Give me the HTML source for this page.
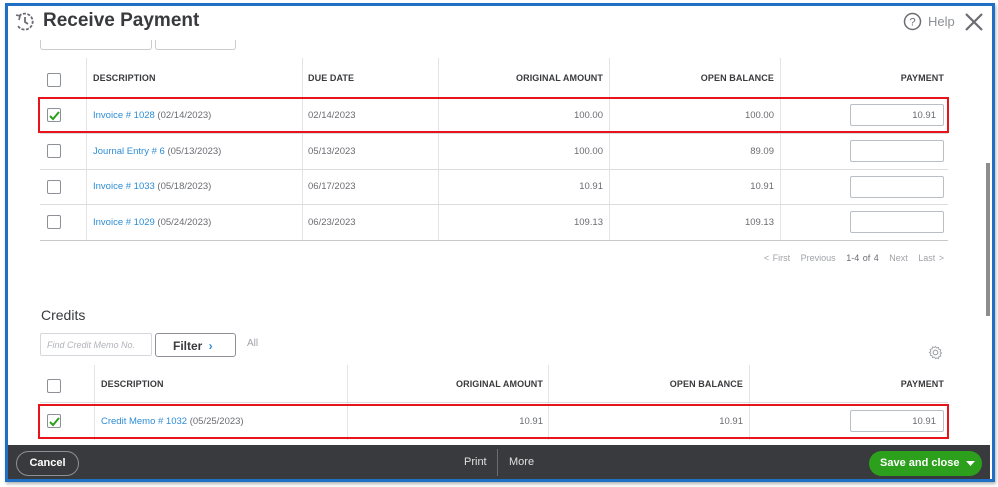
<!DOCTYPE html>
<html><head><meta charset="utf-8"><style>
*{box-sizing:border-box;margin:0;padding:0}
body{width:998px;height:487px;background:#fff;position:relative;overflow:hidden;font-family:"Liberation Sans",Arial,sans-serif;color:#393a3d}
.a{position:absolute}
.frame{left:5px;top:3px;width:990px;height:479px;border:3px solid #1f6fc5;box-shadow:1px 2px 3px rgba(0,0,0,.3)}
.th{font-size:9px;font-weight:bold;color:#393a3d;letter-spacing:.1px}
.td{font-size:9.5px;color:#6b6c72}
.lnk{color:#2d8dd6}
.cb{width:14px;height:14px;border:1px solid #8d9096;border-radius:2px;background:#fff}
.vl{width:1px;background:#e4e4e6}
.hl{height:1px;background:#dcdcde}
.inp{width:94px;height:22px;border:1px solid #babec5;border-radius:2px;background:#fff;font-size:9.5px;color:#6b6c72;display:flex;align-items:center;justify-content:flex-end;padding-right:7px}
.red{border:2px solid #e6151b}
.r{text-align:right}
</style></head><body>
<div class="a frame"></div>
<svg class="a" style="left:14px;top:11px" width="22" height="22" viewBox="0 0 22 22"><path d="M5 5 A8 8 0 1 1 4 15" fill="none" stroke="#6b6c72" stroke-width="1.8" stroke-dasharray="3 1.5"/><path d="M11 6v5l3 2" fill="none" stroke="#6b6c72" stroke-width="1.8"/><path d="M2 4l4 1-1 4" fill="none" stroke="#6b6c72" stroke-width="1.6"/></svg>
<div class="a" style="left:43px;top:10px;font-size:19px;font-weight:bold;color:#393a3d">Receive Payment</div>
<svg class="a" style="left:903px;top:12px" width="19" height="19"><circle cx="9.5" cy="9.5" r="8" fill="none" stroke="#6b6c72" stroke-width="1.5"/><text x="9.5" y="13.5" font-size="11" text-anchor="middle" fill="#6b6c72" font-family="Liberation Sans">?</text></svg>
<div class="a" style="left:928px;top:14px;font-size:13px;color:#8d9096">Help</div>
<svg class="a" style="left:965px;top:13px" width="18" height="18"><path d="M1 1L17 17M17 1L1 17" stroke="#6b6c72" stroke-width="2.2"/></svg>
<div class="a" style="left:40px;top:40px;width:112px;height:10px;border:1px solid #ccc;border-top:none;border-radius:0 0 3px 3px"></div>
<div class="a" style="left:155px;top:40px;width:81px;height:10px;border:1px solid #ccc;border-top:none;border-radius:0 0 3px 3px"></div>
<div class="a" style="left:986px;top:163px;width:4px;height:153px;background:#8d8d8d"></div>
<div class="a vl" style="left:86px;top:58px;height:182px"></div>
<div class="a vl" style="left:302px;top:58px;height:182px"></div>
<div class="a vl" style="left:438px;top:58px;height:182px"></div>
<div class="a vl" style="left:609px;top:58px;height:182px"></div>
<div class="a vl" style="left:780px;top:58px;height:182px"></div>
<div class="a hl" style="left:40px;top:97px;width:908px"></div>
<div class="a hl" style="left:40px;top:133px;width:908px"></div>
<div class="a hl" style="left:40px;top:169px;width:908px"></div>
<div class="a hl" style="left:40px;top:204px;width:908px"></div>
<div class="a hl" style="left:40px;top:240px;width:908px;background:#c9c9cc"></div>
<div class="a cb" style="left:47px;top:73px"></div>
<div class="a th" style="left:93px;top:73px">DESCRIPTION</div>
<div class="a th" style="left:308px;top:73px">DUE DATE</div>
<div class="a th r" style="left:440px;top:73px;width:163px">ORIGINAL AMOUNT</div>
<div class="a th r" style="left:611px;top:73px;width:163px">OPEN BALANCE</div>
<div class="a th r" style="left:782px;top:73px;width:162px">PAYMENT</div>

<div class="a cb" style="left:47px;top:108px"></div>
<svg class="a" style="left:48px;top:109px" width="13" height="13"><path d="M2 7l3 3 6-7" fill="none" stroke="#2ca01c" stroke-width="2"/></svg>
<div class="a td" style="left:93px;top:110px"><span class="lnk">Invoice # 1028</span> (02/14/2023)</div>
<div class="a td" style="left:308px;top:110px">02/14/2023</div>
<div class="a td r" style="left:440px;top:110px;width:163px">100.00</div>
<div class="a td r" style="left:611px;top:110px;width:163px">100.00</div>
<div class="a inp" style="left:850px;top:104px">10.91</div>

<div class="a cb" style="left:47px;top:144px"></div>
<div class="a td" style="left:93px;top:146px"><span class="lnk">Journal Entry # 6</span> (05/13/2023)</div>
<div class="a td" style="left:308px;top:146px">05/13/2023</div>
<div class="a td r" style="left:440px;top:146px;width:163px">100.00</div>
<div class="a td r" style="left:611px;top:146px;width:163px">89.09</div>
<div class="a inp" style="left:850px;top:140px"></div>

<div class="a cb" style="left:47px;top:180px"></div>
<div class="a td" style="left:93px;top:181px"><span class="lnk">Invoice # 1033</span> (05/18/2023)</div>
<div class="a td" style="left:308px;top:181px">06/17/2023</div>
<div class="a td r" style="left:440px;top:181px;width:163px">10.91</div>
<div class="a td r" style="left:611px;top:181px;width:163px">10.91</div>
<div class="a inp" style="left:850px;top:176px"></div>

<div class="a cb" style="left:47px;top:215px"></div>
<div class="a td" style="left:93px;top:217px"><span class="lnk">Invoice # 1029</span> (05/24/2023)</div>
<div class="a td" style="left:308px;top:217px">06/23/2023</div>
<div class="a td r" style="left:440px;top:217px;width:163px">109.13</div>
<div class="a td r" style="left:611px;top:217px;width:163px">109.13</div>
<div class="a inp" style="left:850px;top:211px"></div>

<div class="a red" style="left:38px;top:97px;width:911px;height:36px"></div>
<div class="a" style="left:700px;top:253px;width:244px;text-align:right;font-size:9px;color:#a0a2a7;word-spacing:1px">&lt; First &nbsp;&nbsp;Previous &nbsp;&nbsp;<span style="color:#6b6c72">1-4 of 4</span> &nbsp;&nbsp;Next &nbsp;&nbsp;Last &gt;</div>
<div class="a" style="left:41px;top:307px;font-size:14px;color:#393a3d">Credits</div>
<div class="a" style="left:40px;top:333px;width:112px;height:23px;border:1px solid #d4d7dc;border-radius:2px;font-size:9px;font-style:italic;color:#b0b3b8;padding:6px 0 0 6px">Find Credit Memo No.</div>
<div class="a" style="left:155px;top:333px;width:81px;height:24px;border:1px solid #8d9096;border-radius:3px;font-size:12px;font-weight:bold;color:#393a3d;padding:5px 0 0 17px">Filter <span style="color:#2d8dd6;margin-left:3px">&#x203A;</span></div>
<div class="a" style="left:247px;top:338px;font-size:10px;color:#a0a2a7">All</div>
<svg class="a" style="left:928px;top:345px" width="15" height="15" viewBox="0 0 16 16"><circle cx="8" cy="8" r="2.5" fill="none" stroke="#a0a2a7" stroke-width="1.2"/><path d="M8 1.5l1.2 1.7 2-.6.4 2 2 .6-.6 2 1.5 1.3-1.5 1.3.6 2-2 .6-.4 2-2-.6L8 14.5l-1.2-1.7-2 .6-.4-2-2-.6.6-2L1.5 8 3 6.7l-.6-2 2-.6.4-2 2 .6z" fill="none" stroke="#a0a2a7" stroke-width="1"/></svg>
<div class="a vl" style="left:94px;top:365px;height:75px"></div>
<div class="a vl" style="left:347px;top:365px;height:75px"></div>
<div class="a vl" style="left:548px;top:365px;height:75px"></div>
<div class="a vl" style="left:749px;top:365px;height:75px"></div>
<div class="a hl" style="left:40px;top:402px;width:908px"></div>
<div class="a cb" style="left:47px;top:379px"></div>
<div class="a th" style="left:101px;top:379px">DESCRIPTION</div>
<div class="a th r" style="left:350px;top:379px;width:193px">ORIGINAL AMOUNT</div>
<div class="a th r" style="left:551px;top:379px;width:192px">OPEN BALANCE</div>
<div class="a th r" style="left:752px;top:379px;width:192px">PAYMENT</div>
<div class="a cb" style="left:47px;top:414px"></div>
<svg class="a" style="left:48px;top:415px" width="13" height="13"><path d="M2 7l3 3 6-7" fill="none" stroke="#2ca01c" stroke-width="2"/></svg>
<div class="a td" style="left:101px;top:416px"><span class="lnk">Credit Memo # 1032</span> (05/25/2023)</div>
<div class="a td r" style="left:350px;top:416px;width:193px">10.91</div>
<div class="a td r" style="left:551px;top:416px;width:192px">10.91</div>
<div class="a inp" style="left:850px;top:410px">10.91</div>
<div class="a red" style="left:38px;top:404px;width:911px;height:35px"></div>
<div class="a" style="left:8px;top:445px;width:982px;height:34px;background:#393a3d"></div>
<div class="a" style="left:16px;top:451px;width:63px;height:25px;border:1px solid #8d9096;border-radius:13px;color:#fff;font-size:11px;font-weight:bold;text-align:center;line-height:23px">Cancel</div>
<div class="a" style="left:464px;top:456px;font-size:11px;color:#e0e0e0">Print</div>
<div class="a" style="left:497px;top:449px;width:1px;height:27px;background:#6b6c72"></div>
<div class="a" style="left:509px;top:456px;font-size:11px;color:#e0e0e0">More</div>
<div class="a" style="left:869px;top:451px;width:113px;height:25px;background:#2ca01c;border-radius:13px;color:#fff;font-size:11px;font-weight:bold;line-height:25px;padding-left:11px">Save and close</div>
<svg class="a" style="left:966px;top:461px" width="9" height="6"><path d="M0 0h9L4.5 5z" fill="#fff"/></svg>
</body></html>
